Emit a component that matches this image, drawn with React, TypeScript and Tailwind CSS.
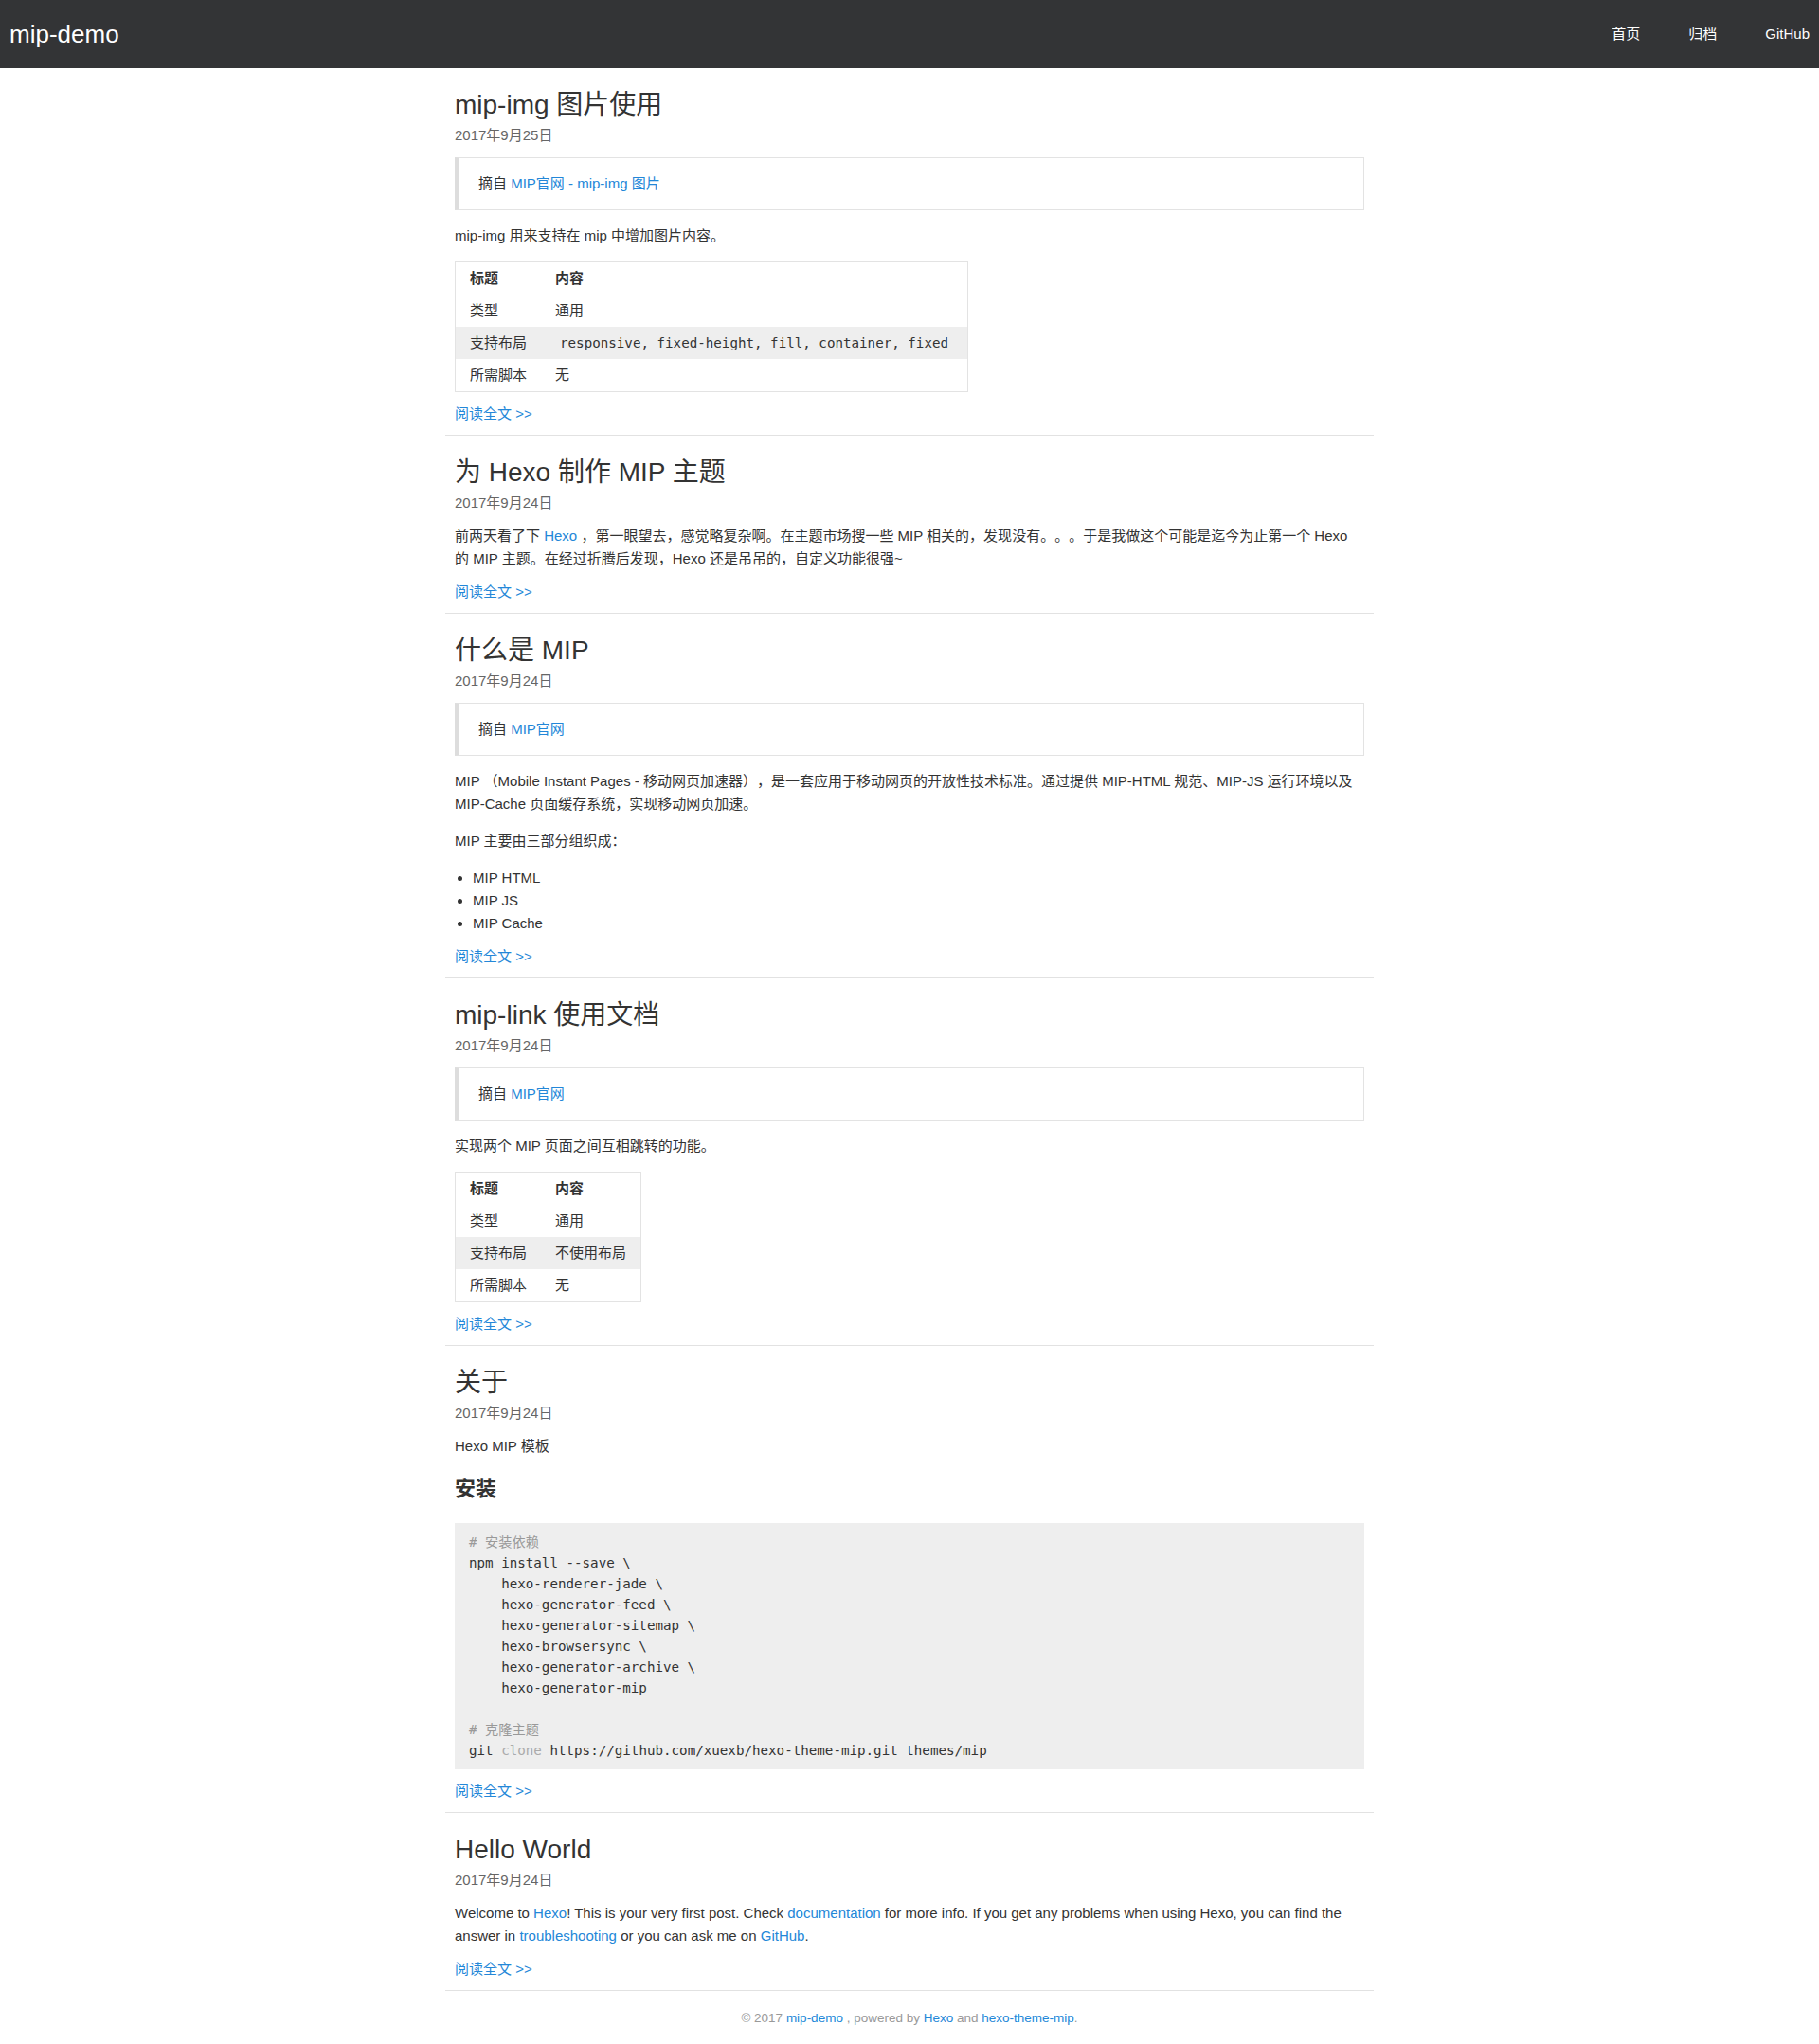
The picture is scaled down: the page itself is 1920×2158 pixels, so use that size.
import React from 'react';

const LINK = 'text-[#2387d8]';

type Row = { label: string; value: React.ReactNode; shaded?: boolean };

const InfoTable = ({ rows }: { rows: Row[] }) => (
  <table className="self-start border border-[#e3e3e3] border-collapse text-[15px] leading-[24px]">
    <thead>
      <tr>
        <th className="px-[15px] py-[5px] text-left font-bold">标题</th>
        <th className="px-[15px] py-[5px] text-left font-bold">内容</th>
      </tr>
    </thead>
    <tbody>
      {rows.map((row) => (
        <tr key={row.label} className={row.shaded ? 'bg-[#eeeeee]' : ''}>
          <td className="px-[15px] py-[5px] whitespace-nowrap">{row.label}</td>
          <td className="px-[15px] py-[5px] whitespace-nowrap">{row.value}</td>
        </tr>
      ))}
    </tbody>
  </table>
);

const Quote = ({ children }: { children: React.ReactNode }) => (
  <blockquote className="border border-[#e3e3e3] border-l-[5px] border-l-[#dddddd] px-[20px] py-[15px]">
    摘自 {children}
  </blockquote>
);

const Post = ({
  title,
  date,
  children,
}: {
  title: string;
  date: string;
  children: React.ReactNode;
}) => (
  <article className="px-[10px] pt-[19px] pb-[10px] border-b border-[#e2e2e2]">
    <h2 className="text-[28px] leading-[40px] text-[#333]">{title}</h2>
    <div className="text-[15px] leading-[24px] text-[#666]">{date}</div>
    <div className="mt-[11px] flex flex-col gap-[15px]">{children}</div>
    <a href="#" className={`mt-[11px] block ${LINK}`}>
      阅读全文 &gt;&gt;
    </a>
  </article>
);

const codeLines = [
  'npm install --save \\',
  '    hexo-renderer-jade \\',
  '    hexo-generator-feed \\',
  '    hexo-generator-sitemap \\',
  '    hexo-browsersync \\',
  '    hexo-generator-archive \\',
  '    hexo-generator-mip',
];

export default function App() {
  return (
    <div className="min-h-screen bg-white text-[#333] text-[15px] leading-[24px] [text-spacing-trim:space-all] font-['Liberation_Sans','Noto_Sans_CJK_SC',sans-serif]">
      {/* Top bar */}
      <header className="h-[72px] bg-[#333436] flex items-center justify-between pl-[10px] pr-[10px]">
        <a href="#" className="text-white text-[26px]">
          mip-demo
        </a>
        <nav className="flex gap-[51px] text-white text-[15px]">
          <a href="#">首页</a>
          <a href="#">归档</a>
          <a href="#">GitHub</a>
        </nav>
      </header>

      <main className="w-[980px] mx-auto">
        <Post title="mip-img 图片使用" date="2017年9月25日">
          <Quote>
            <a href="#" className={LINK}>
              MIP官网 - mip-img 图片
            </a>
          </Quote>
          <p>mip-img 用来支持在 mip 中增加图片内容。</p>
          <InfoTable
            rows={[
              { label: '类型', value: '通用' },
              {
                label: '支持布局',
                shaded: true,
                value: (
                  <code className="px-[5px] text-[14.2px] font-['DejaVu_Sans_Mono',monospace]">
                    responsive, fixed-height, fill, container, fixed
                  </code>
                ),
              },
              { label: '所需脚本', value: '无' },
            ]}
          />
        </Post>

        <Post title="为 Hexo 制作 MIP 主题" date="2017年9月24日">
          <p>
            前两天看了下{' '}
            <a href="#" className={LINK}>
              Hexo
            </a>{' '}
            ，第一眼望去，感觉略复杂啊。在主题市场搜一些 MIP 相关的，发现没有。。。于是我做这个可能是迄今为止第一个 Hexo 的 MIP
            主题。在经过折腾后发现，Hexo 还是吊吊的，自定义功能很强~
          </p>
        </Post>

        <Post title="什么是 MIP" date="2017年9月24日">
          <Quote>
            <a href="#" className={LINK}>
              MIP官网
            </a>
          </Quote>
          <p>
            MIP （Mobile Instant Pages - 移动网页加速器），是一套应用于移动网页的开放性技术标准。通过提供 MIP-HTML 规范、MIP-JS
            运行环境以及 MIP-Cache 页面缓存系统，实现移动网页加速。
          </p>
          <p>MIP 主要由三部分组织成：</p>
          <ul className="list-disc pl-[19px]">
            <li>MIP HTML</li>
            <li>MIP JS</li>
            <li>MIP Cache</li>
          </ul>
        </Post>

        <Post title="mip-link 使用文档" date="2017年9月24日">
          <Quote>
            <a href="#" className={LINK}>
              MIP官网
            </a>
          </Quote>
          <p>实现两个 MIP 页面之间互相跳转的功能。</p>
          <InfoTable
            rows={[
              { label: '类型', value: '通用' },
              { label: '支持布局', value: '不使用布局', shaded: true },
              { label: '所需脚本', value: '无' },
            ]}
          />
        </Post>

        <Post title="关于" date="2017年9月24日">
          <p>Hexo MIP 模板</p>
          <h3 className="mt-[2px] text-[22px] leading-[32px] font-bold">安装</h3>
          <pre className="mt-[5px] bg-[#eeeeee] px-[15px] py-[9px] text-[14.2px] leading-[22px] text-[#333] font-['DejaVu_Sans_Mono','Noto_Sans_CJK_SC',monospace]">
            <span className="text-[#999]"># 安装依赖</span>
            {'\n'}
            {codeLines.join('\n')}
            {'\n\n'}
            <span className="text-[#999]"># 克隆主题</span>
            {'\n'}
            git <span className="text-[#aaa]">clone</span> https://github.com/xuexb/hexo-theme-mip.git themes/mip
          </pre>
        </Post>

        <Post title="Hello World" date="2017年9月24日">
          <p>
            Welcome to{' '}
            <a href="#" className={LINK}>
              Hexo
            </a>
            ! This is your very first post. Check{' '}
            <a href="#" className={LINK}>
              documentation
            </a>{' '}
            for more info. If you get any problems when using Hexo, you can find the answer in{' '}
            <a href="#" className={LINK}>
              troubleshooting
            </a>{' '}
            or you can ask me on{' '}
            <a href="#" className={LINK}>
              GitHub
            </a>
            .
          </p>
        </Post>

        <footer className="pt-[17px] pb-[16px] text-center text-[13.5px] leading-[24px] text-[#999]">
          © 2017{' '}
          <a href="#" className={LINK}>
            mip-demo
          </a>{' '}
          , powered by{' '}
          <a href="#" className={LINK}>
            Hexo
          </a>{' '}
          and{' '}
          <a href="#" className={LINK}>
            hexo-theme-mip
          </a>
          .
        </footer>
      </main>
    </div>
  );
}
